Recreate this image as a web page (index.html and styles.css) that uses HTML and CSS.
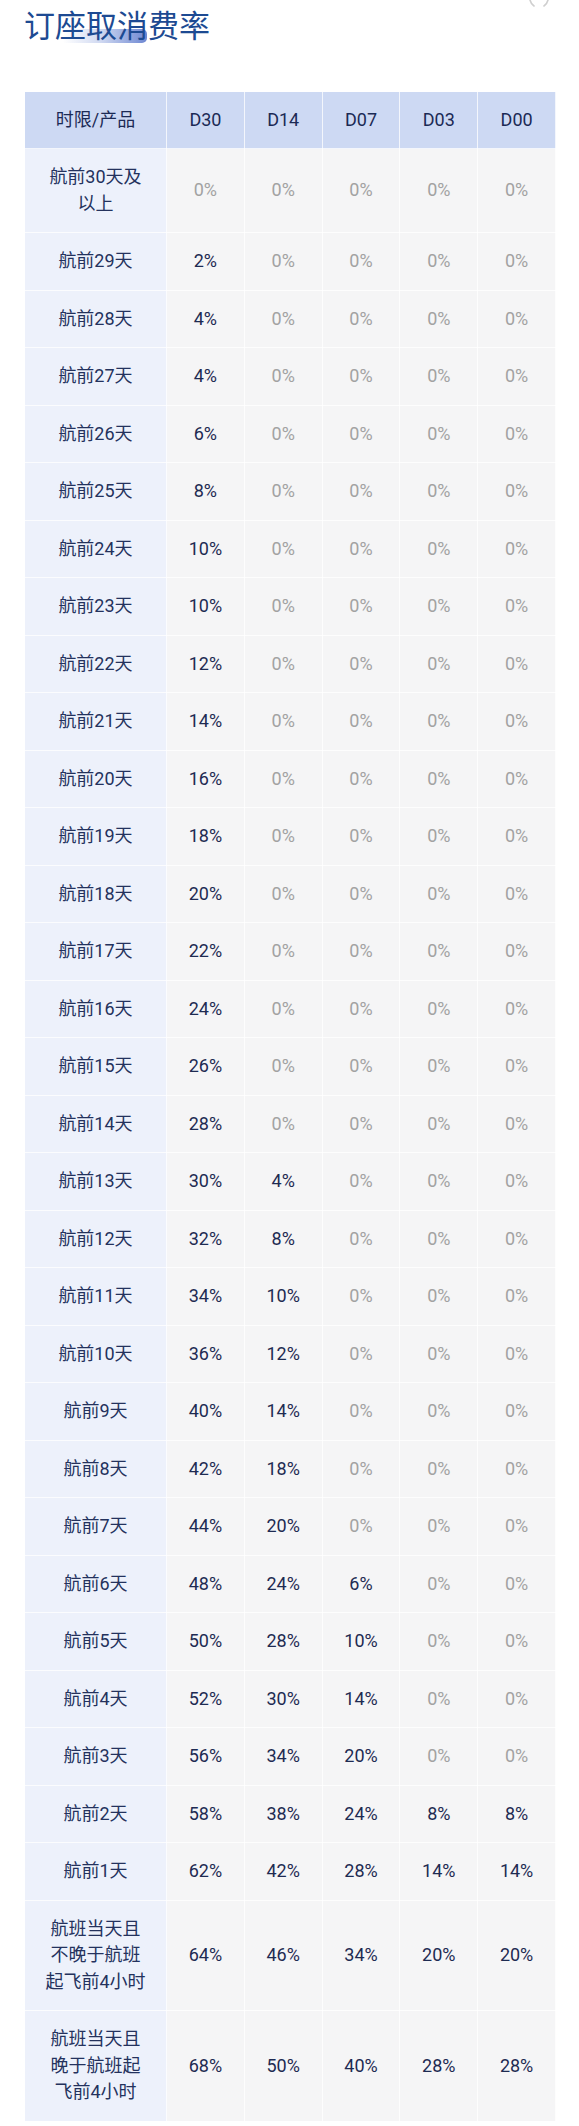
FILE: index.html
```html
<!DOCTYPE html>
<html lang="zh-CN">
<head>
<meta charset="utf-8">
<title>订座取消费率</title>
<link rel="stylesheet" href="styles.css">
</head>
<body>
<div class="page">
  <svg class="corner-icon" width="30" height="8" viewBox="0 0 30 8" aria-hidden="true">
    <path d="M6 0 Q7 4 10 6" fill="none" stroke="#cfcfcf" stroke-width="1.6" stroke-linecap="round"/>
    <path d="M24 0 Q23 4 20 6" fill="none" stroke="#cfcfcf" stroke-width="1.6" stroke-linecap="round"/>
  </svg>
  <h1 class="title"><span class="title-text">订座取消费率</span></h1>
  <table class="fees">
    <thead>
      <tr><th class="first">时限/产品</th><th>D30</th><th>D14</th><th>D07</th><th>D03</th><th>D00</th></tr>
    </thead>
    <tbody>
      <tr><td class="label">航前30天及以上</td><td class="zero">0%</td><td class="zero">0%</td><td class="zero">0%</td><td class="zero">0%</td><td class="zero">0%</td></tr>
      <tr><td class="label">航前29天</td><td>2%</td><td class="zero">0%</td><td class="zero">0%</td><td class="zero">0%</td><td class="zero">0%</td></tr>
      <tr><td class="label">航前28天</td><td>4%</td><td class="zero">0%</td><td class="zero">0%</td><td class="zero">0%</td><td class="zero">0%</td></tr>
      <tr><td class="label">航前27天</td><td>4%</td><td class="zero">0%</td><td class="zero">0%</td><td class="zero">0%</td><td class="zero">0%</td></tr>
      <tr><td class="label">航前26天</td><td>6%</td><td class="zero">0%</td><td class="zero">0%</td><td class="zero">0%</td><td class="zero">0%</td></tr>
      <tr><td class="label">航前25天</td><td>8%</td><td class="zero">0%</td><td class="zero">0%</td><td class="zero">0%</td><td class="zero">0%</td></tr>
      <tr><td class="label">航前24天</td><td>10%</td><td class="zero">0%</td><td class="zero">0%</td><td class="zero">0%</td><td class="zero">0%</td></tr>
      <tr><td class="label">航前23天</td><td>10%</td><td class="zero">0%</td><td class="zero">0%</td><td class="zero">0%</td><td class="zero">0%</td></tr>
      <tr><td class="label">航前22天</td><td>12%</td><td class="zero">0%</td><td class="zero">0%</td><td class="zero">0%</td><td class="zero">0%</td></tr>
      <tr><td class="label">航前21天</td><td>14%</td><td class="zero">0%</td><td class="zero">0%</td><td class="zero">0%</td><td class="zero">0%</td></tr>
      <tr><td class="label">航前20天</td><td>16%</td><td class="zero">0%</td><td class="zero">0%</td><td class="zero">0%</td><td class="zero">0%</td></tr>
      <tr><td class="label">航前19天</td><td>18%</td><td class="zero">0%</td><td class="zero">0%</td><td class="zero">0%</td><td class="zero">0%</td></tr>
      <tr><td class="label">航前18天</td><td>20%</td><td class="zero">0%</td><td class="zero">0%</td><td class="zero">0%</td><td class="zero">0%</td></tr>
      <tr><td class="label">航前17天</td><td>22%</td><td class="zero">0%</td><td class="zero">0%</td><td class="zero">0%</td><td class="zero">0%</td></tr>
      <tr><td class="label">航前16天</td><td>24%</td><td class="zero">0%</td><td class="zero">0%</td><td class="zero">0%</td><td class="zero">0%</td></tr>
      <tr><td class="label">航前15天</td><td>26%</td><td class="zero">0%</td><td class="zero">0%</td><td class="zero">0%</td><td class="zero">0%</td></tr>
      <tr><td class="label">航前14天</td><td>28%</td><td class="zero">0%</td><td class="zero">0%</td><td class="zero">0%</td><td class="zero">0%</td></tr>
      <tr><td class="label">航前13天</td><td>30%</td><td>4%</td><td class="zero">0%</td><td class="zero">0%</td><td class="zero">0%</td></tr>
      <tr><td class="label">航前12天</td><td>32%</td><td>8%</td><td class="zero">0%</td><td class="zero">0%</td><td class="zero">0%</td></tr>
      <tr><td class="label">航前11天</td><td>34%</td><td>10%</td><td class="zero">0%</td><td class="zero">0%</td><td class="zero">0%</td></tr>
      <tr><td class="label">航前10天</td><td>36%</td><td>12%</td><td class="zero">0%</td><td class="zero">0%</td><td class="zero">0%</td></tr>
      <tr><td class="label">航前9天</td><td>40%</td><td>14%</td><td class="zero">0%</td><td class="zero">0%</td><td class="zero">0%</td></tr>
      <tr><td class="label">航前8天</td><td>42%</td><td>18%</td><td class="zero">0%</td><td class="zero">0%</td><td class="zero">0%</td></tr>
      <tr><td class="label">航前7天</td><td>44%</td><td>20%</td><td class="zero">0%</td><td class="zero">0%</td><td class="zero">0%</td></tr>
      <tr><td class="label">航前6天</td><td>48%</td><td>24%</td><td>6%</td><td class="zero">0%</td><td class="zero">0%</td></tr>
      <tr><td class="label">航前5天</td><td>50%</td><td>28%</td><td>10%</td><td class="zero">0%</td><td class="zero">0%</td></tr>
      <tr><td class="label">航前4天</td><td>52%</td><td>30%</td><td>14%</td><td class="zero">0%</td><td class="zero">0%</td></tr>
      <tr><td class="label">航前3天</td><td>56%</td><td>34%</td><td>20%</td><td class="zero">0%</td><td class="zero">0%</td></tr>
      <tr><td class="label">航前2天</td><td>58%</td><td>38%</td><td>24%</td><td>8%</td><td>8%</td></tr>
      <tr><td class="label">航前1天</td><td>62%</td><td>42%</td><td>28%</td><td>14%</td><td>14%</td></tr>
      <tr><td class="label">航班当天且不晚于航班起飞前4小时</td><td>64%</td><td>46%</td><td>34%</td><td>20%</td><td>20%</td></tr>
      <tr><td class="label">航班当天且晚于航班起飞前4小时</td><td>68%</td><td>50%</td><td>40%</td><td>28%</td><td>28%</td></tr>
    </tbody>
  </table>
</div>
</body>
</html>
```
FILE: styles.css
```css
html, body {
  margin: 0;
  padding: 0;
  background: #ffffff;
}

body {
  font-family: Roboto, "Noto Sans CJK SC", sans-serif;
  color: #1e2b55;
}

.page {
  position: relative;
  padding: 8px 23px 0 24px;
}

.corner-icon {
  position: absolute;
  top: 0;
  right: 25px;
}

.title {
  margin: 0;
  font-family: "Noto Sans CJK SC", sans-serif;
  font-size: 31px;
  line-height: 31px;
  font-weight: 400;
  color: #1d4a92;
}

.title-text {
  position: relative;
  display: inline-block;
  z-index: 0;
}

.title-text::before {
  content: "";
  position: absolute;
  left: 39px;
  top: 21px;
  width: 84px;
  height: 14px;
  border-radius: 0 5px 5px 0;
  background: linear-gradient(90deg, rgba(120, 145, 215, 0) 0%, rgba(120, 145, 215, 0.35) 45%, #6d87d2 100%);
  z-index: -1;
}

.fees {
  margin-top: 52px;
  width: 532px;
  border-collapse: collapse;
  table-layout: fixed;
  font-size: 18px;
}

.fees th,
.fees td {
  border: 1px solid rgba(255, 255, 255, 0.75);
  text-align: center;
  vertical-align: middle;
}

.fees th {
  background: #cdd9f3;
  font-weight: 400;
  color: #1b2a55;
  line-height: 26px;
  padding: 15px 0;
}

.fees th.first {
  width: 141px;
}

.fees td {
  background: #f5f5f6;
  line-height: 26.5px;
  padding: 15px 0;
  color: #1e2b52;
}

.fees td.label {
  background: #edf1fb;
  padding: 15px 18px;
  color: #24325d;
}

.fees td.zero {
  color: #a2a2a2;
}
```
